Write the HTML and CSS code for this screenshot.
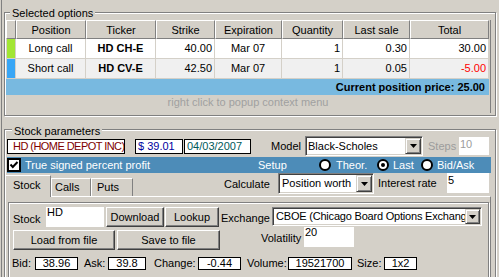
FILE: index.html
```html
<!DOCTYPE html>
<html>
<head>
<meta charset="utf-8">
<title>Options</title>
<link rel="stylesheet" href="styles.css">
</head>
<body>
<div class="app">
  <div class="group g1">
    <div class="gtitle">Selected options</div>
    <div class="grid">
      <div class="hrow">
        <div class="hc w0"></div>
        <div class="hc w1">Position</div>
        <div class="hc w2">Ticker</div>
        <div class="hc w3">Strike</div>
        <div class="hc w4">Expiration</div>
        <div class="hc w5">Quantity</div>
        <div class="hc w6">Last sale</div>
        <div class="hc w7">Total</div>
      </div>
      <div class="row">
        <div class="ind w0 green"></div>
        <div class="c w1 ctr">Long call</div>
        <div class="c w2 ctr b">HD CH-E</div>
        <div class="c w3 rt">40.00</div>
        <div class="c w4 ctr">Mar 07</div>
        <div class="c w5 rt">1</div>
        <div class="c w6 rt">0.30</div>
        <div class="c w7 rt">30.00</div>
      </div>
      <div class="row alt">
        <div class="ind w0 blue"></div>
        <div class="c w1 ctr">Short call</div>
        <div class="c w2 ctr b">HD CV-E</div>
        <div class="c w3 rt">42.50</div>
        <div class="c w4 ctr">Mar 07</div>
        <div class="c w5 rt">1</div>
        <div class="c w6 rt">0.05</div>
        <div class="c w7 rt neg">-5.00</div>
      </div>
      <div class="sumbar">Current position price: 25.00</div>
      <div class="hint">right click to popup context menu</div>
    </div>
  </div>

  <div class="group g2">
    <div class="gtitle">Stock parameters</div>
    <div class="prow">
      <div class="box name">HD (HOME DEPOT INC)</div>
      <div class="box price">$ 39.01</div>
      <div class="box date">04/03/2007</div>
      <div class="lbl model">Model</div>
      <div class="combo cmodel">
        <div class="val">Black-Scholes</div>
        <div class="dd"><svg width="7" height="4" viewBox="0 0 7 4"><polygon points="0,0 7,0 3.5,4" fill="#000"/></svg></div>
      </div>
      <div class="lbl steps">Steps</div>
      <div class="field fsteps">10</div>
    </div>

    <div class="bluebar">
      <svg class="chk" width="14" height="14" viewBox="0 0 14 14"><rect x="0" y="0" width="14" height="14" fill="#000"/><rect x="2" y="2" width="10" height="10" fill="#fff"/><polyline points="3.5,6.5 5.8,9 10.5,4" fill="none" stroke="#000" stroke-width="2"/></svg>
      <span class="bt t-true">True signed percent profit</span>
      <span class="bt t-setup">Setup</span>
      <svg class="rad" width="12" height="12" viewBox="0 0 12 12"><circle cx="6" cy="6" r="5" fill="#fff" stroke="#000" stroke-width="2"/></svg>
      <span class="bt t-theor">Theor.</span>
      <svg class="rad" width="12" height="12" viewBox="0 0 12 12"><circle cx="6" cy="6" r="5" fill="#fff" stroke="#000" stroke-width="2"/><circle cx="6" cy="6" r="2" fill="#000"/></svg>
      <span class="bt t-last">Last</span>
      <svg class="rad" width="12" height="12" viewBox="0 0 12 12"><circle cx="6" cy="6" r="5" fill="#fff" stroke="#000" stroke-width="2"/></svg>
      <span class="bt t-bid">Bid/Ask</span>
    </div>

    <div class="tabrow">
      <div class="tabs">
        <div class="tab sel">Stock</div>
        <div class="tab t-calls">Calls</div>
        <div class="tab t-puts">Puts</div>
      </div>
      <div class="lbl calc">Calculate</div>
      <div class="combo ccalc">
        <div class="val">Position worth</div>
        <div class="dd"><svg width="7" height="4" viewBox="0 0 7 4"><polygon points="0,0 7,0 3.5,4" fill="#000"/></svg></div>
      </div>
      <div class="lbl irate">Interest rate</div>
      <div class="field frate">5</div>
    </div>

    <div class="tabpanel">
      <div class="inner">
        <div class="rowa">
          <div class="lbl lstock">Stock</div>
          <div class="field fstock">HD</div>
          <div class="btn bdl">Download</div>
          <div class="btn blk">Lookup</div>
          <div class="lbl lex">Exchange</div>
          <div class="combo cex">
            <div class="val">CBOE (Chicago Board Options Exchang</div>
            <div class="dd"><svg width="7" height="4" viewBox="0 0 7 4"><polygon points="0,0 7,0 3.5,4" fill="#000"/></svg></div>
          </div>
        </div>
        <div class="rowb">
          <div class="btn bload">Load from file</div>
          <div class="btn bsave">Save to file</div>
          <div class="lbl lvol">Volatility</div>
          <div class="field fvol">20</div>
        </div>
        <div class="rowc">
          <div class="lbl q lbid">Bid:</div>
          <div class="qbox qb1">38.96</div>
          <div class="lbl q lask">Ask:</div>
          <div class="qbox qb2">39.8</div>
          <div class="lbl q lchg">Change:</div>
          <div class="qbox qb3">-0.44</div>
          <div class="lbl q lvolm">Volume:</div>
          <div class="qbox qb4">19521700</div>
          <div class="lbl q lsize">Size:</div>
          <div class="qbox qb5">1x2</div>
        </div>
      </div>
    </div>
  </div>
</div>
</body>
</html>
```

FILE: styles.css
```css
* { box-sizing: border-box; }
html, body { margin: 0; padding: 0; }
body {
  width: 499px;
  height: 277px;
  overflow: hidden;
  background: #d4d0c8;
  font-family: "Liberation Sans", Arial, sans-serif;
  font-size: 11px;
  color: #000;
}
.app {
  margin-left: 1px;
  border-left: 1px solid #808080;
  height: 277px;
  padding-top: 12px;
}

/* group boxes */
.group {
  margin-left: 2px;
  width: 492px;
  border: 1px solid #808080;
  box-shadow: inset 1px 1px 0 #fff, 1px 1px 0 #fff;
}
.g1 { padding: 0 0 2px 1px; }
.g2 { margin-top: 13px; height: 220px; }
.gtitle {
  width: max-content;
  line-height: 14px;
  padding: 0 2px;
  background: #d4d0c8;
  white-space: nowrap;
}
.g1 .gtitle { margin: -7px 0 0 4px; }
.g2 .gtitle { margin: -6px 0 -2px 7px; }

/* options grid */
.grid { width: 485px; border-right: 1px solid #808080; }
.hrow, .row { display: flex; }
.hc {
  height: 19px;
  border: 1px solid;
  border-color: #fff #808080 #808080 #fff;
  line-height: 14px;
  padding-top: 2px;
  text-align: center;
  white-space: nowrap;
}
.w0 { width: 10px; }
.w1 { width: 70px; }
.w2 { width: 70px; }
.w3 { width: 59px; }
.w4 { width: 67px; }
.w5 { width: 61px; }
.w6 { width: 67px; }
.w7 { width: 79px; }
.row { height: 20px; }
.c {
  height: 20px;
  line-height: 19px;
  border-right: 1px solid #d4d0c8;
  border-bottom: 1px solid #d4d0c8;
  background: #fff;
  white-space: nowrap;
  overflow: hidden;
}
.alt .c { background: #f0f0f0; }
.rt { text-align: right; padding-right: 2px; }
.ctr { text-align: center; }
.b { font-weight: bold; }
.neg { color: #ff0000; }
.ind {
  height: 20px;
  border-left: 1px solid #d4d0c8;
  border-right: 1px solid #d4d0c8;
  border-bottom: 1px solid #d4d0c8;
}
.green { background: #a2e634; }
.blue { background: #38a6f6; }
.sumbar {
  width: 483px;
  height: 16px;
  line-height: 16px;
  background: #78b9e0;
  font-weight: bold;
  text-align: right;
  padding-right: 4px;
  white-space: nowrap;
}
.hint {
  height: 18px;
  line-height: 14px;
  text-align: center;
  color: #a0a0a0;
}

/* stock params row */
.prow { display: flex; align-items: flex-start; height: 20px; }
.box {
  height: 15px;
  margin-top: 3px;
  border: 1px solid #000;
  background: #fff;
  line-height: 13px;
  white-space: nowrap;
  overflow: hidden;
}
.name { margin-left: 2px; width: 118px; padding-left: 5px; color: #800000; letter-spacing: -0.55px; }
.price { margin-left: 10px; width: 48px; padding-left: 2px; color: #0000a0; }
.date { margin-left: 1px; width: 67px; padding-left: 2px; color: #005a5a; }
.lbl { line-height: 14px; white-space: nowrap; }
.model { margin-left: 20px; width: 34px; margin-top: 3px; }
.steps { margin-left: 5px; width: 31px; margin-top: 3px; color: #9c9c9c; }
.field {
  background: #fff;
  line-height: 10px;
  padding-left: 1px;
  white-space: nowrap;
}
.fsteps { width: 30px; height: 18px; margin-top: 1px; padding-top: 2px; color: #9c9c9c; }

/* combo boxes */
.combo {
  display: flex;
  background: #fff;
  border: 1px solid;
  border-color: #808080 #fff #fff #808080;
  box-shadow: inset 1px 1px 0 #404040, inset -1px -1px 0 #d4d0c8;
  padding: 1px;
}
.combo .val {
  flex: 1;
  overflow: hidden;
  white-space: nowrap;
  padding-left: 1px;
}
.dd {
  flex: none;
  width: 16px;
  background: #d4d0c8;
  border: 1px solid;
  border-color: #d4d0c8 #404040 #404040 #d4d0c8;
  box-shadow: inset 1px 1px 0 #fff, inset -1px -1px 0 #808080;
  display: flex;
  align-items: center;
  justify-content: center;
}
.dd svg { display: block; }
.cmodel { width: 118px; height: 20px; }
.cmodel .val { line-height: 16px; }
.ccalc { width: 96px; height: 21px; }
.ccalc .val { line-height: 17px; padding-left: 2px; }
.cex { width: 210px; height: 19px; }
.cex .val { line-height: 15px; padding-left: 2px; letter-spacing: -0.2px; }
.cex .dd { width: 15px; }

/* blue bar */
.bluebar {
  display: flex;
  align-items: center;
  margin-top: 1px;
  margin-left: 2px;
  width: 484px;
  height: 16px;
  background: #4d8cb8;
  color: #fff;
}
.chk, .rad { display: block; flex: none; }
.bt { line-height: 14px; white-space: nowrap; }
.t-true { margin-left: 4px; width: 233px; }
.t-setup { width: 61px; }
.t-theor { margin-left: 5px; width: 41px; }
.t-last { margin-left: 4px; width: 28px; }
.t-bid { margin-left: 4px; }

/* tabs row */
.tabrow { display: flex; align-items: flex-start; height: 23px; }
.tabs { display: flex; align-items: flex-end; height: 23px; width: 128px; }
.tab {
  background: #d4d0c8;
  border-top: 1px solid #fff;
  border-left: 1px solid #fff;
  border-right: 1px solid #808080;
  line-height: 14px;
  white-space: nowrap;
}
.tab.sel {
  width: 46px;
  height: 22px;
  margin-bottom: -1px;
  padding: 2px 0 0 7px;
  position: relative;
  z-index: 1;
}
.t-calls { width: 40px; height: 18px; padding: 1px 0 0 3px; }
.t-puts { width: 42px; height: 18px; padding: 1px 0 0 5px; }
.calc { margin-left: 91px; width: 54px; margin-top: 4px; }
.irate { margin-left: 4px; width: 69px; margin-top: 3px; }
.frate { width: 42px; height: 20px; padding-top: 2px; }

/* tab panel */
.tabpanel {
  width: 486px;
  height: 120px;
  border-top: 1px solid #fff;
  border-left: 1px solid #fff;
  border-right: 1px solid #808080;
  padding: 5px 0 0 2px;
}
.inner {
  width: 481px;
  height: 110px;
  border: 1px solid #808080;
  box-shadow: inset 1px 1px 0 #fff, 1px 1px 0 #fff;
  padding-top: 4px;
}
.rowa, .rowb, .rowc { display: flex; align-items: flex-start; }
.rowa { height: 20px; }
.rowb { height: 23px; }
.rowc { height: 14px; margin-top: 7px; }
.btn {
  height: 20px;
  border: 1px solid;
  border-color: #fff #404040 #404040 #fff;
  box-shadow: inset -1px -1px 0 #808080;
  background: #d4d0c8;
  text-align: center;
  line-height: 19px;
  white-space: nowrap;
}
.lstock { margin-left: 4px; width: 33px; margin-top: 5px; }
.fstock { width: 58px; height: 20px; }
.bdl { margin-left: 2px; width: 58px; }
.blk { margin-left: 1px; width: 54px; }
.lex { margin-left: 2px; width: 51px; margin-top: 4px; }
.bload { margin-left: 4px; margin-top: 3px; width: 102px; }
.bsave { margin-left: 2px; margin-top: 3px; width: 103px; }
.lvol { margin-left: 41px; width: 43px; margin-top: 4px; }
.fvol { width: 50px; height: 20px; }
.q { line-height: 13px; }
.qbox {
  height: 13px;
  border: 1px solid #000;
  background: #fff;
  line-height: 11px;
  text-align: center;
  white-space: nowrap;
}
.lbid { margin-left: 3px; width: 23px; }
.qb1 { width: 43px; }
.lask { margin-left: 6px; width: 24px; }
.qb2 { width: 38px; }
.lchg { margin-left: 8px; width: 44px; }
.qb3 { width: 43px; }
.lvolm { margin-left: 6px; width: 41px; }
.qb4 { width: 64px; }
.lsize { margin-left: 5px; width: 27px; }
.qb5 { width: 33px; }
```
